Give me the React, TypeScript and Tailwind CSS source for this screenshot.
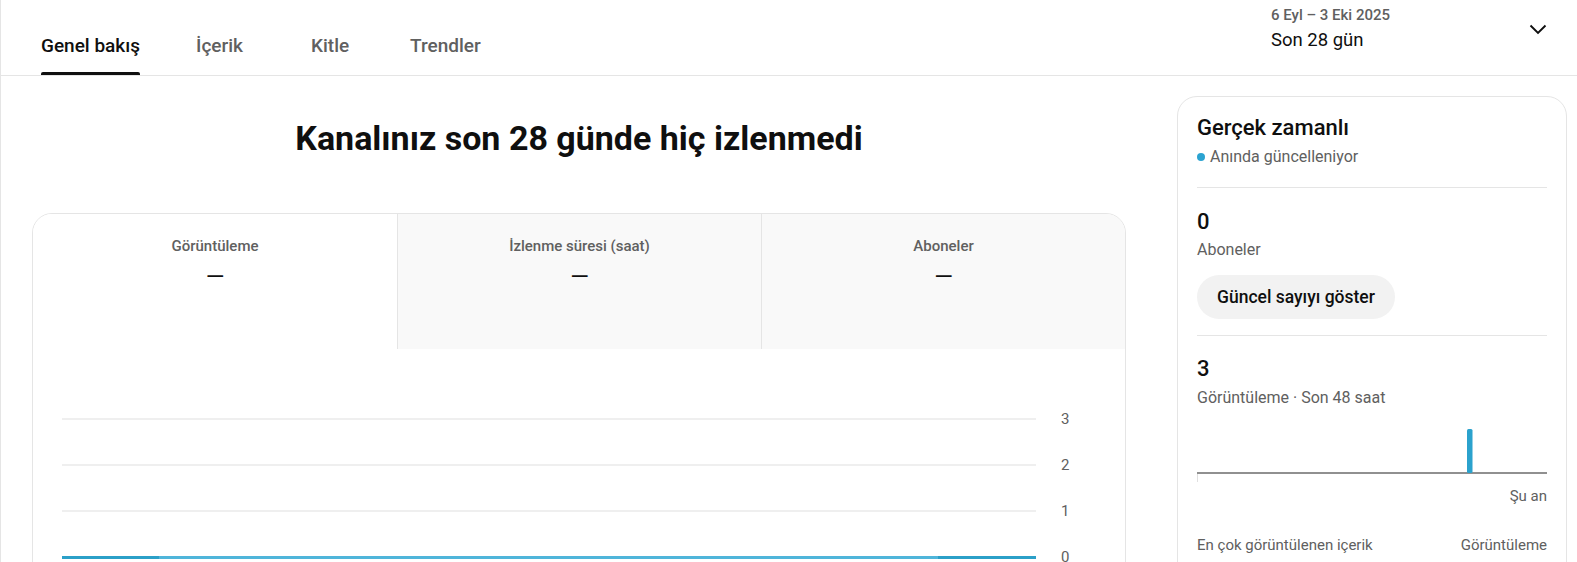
import React from 'react';

const tabs = [
  { label: 'Genel bakış', width: 'w-[155px]', active: true },
  { label: 'İçerik', width: 'w-[115px]', active: false },
  { label: 'Kitle', width: 'w-[99px]', active: false },
  { label: 'Trendler', width: 'w-auto', active: false },
];

const metrics = ['Görüntüleme', 'İzlenme süresi (saat)', 'Aboneler'];

function Header() {
  return (
    <div className="h-[76px] border-b border-[#e5e5e5] flex pl-[40px] pr-[30px]">
      <div className="flex items-start pt-[34px]">
        {tabs.map((tab) => (
          <div key={tab.label} className={tab.width}>
            <div className="inline-flex flex-col">
              <span
                className={
                  tab.active
                    ? 'text-[19px] leading-[24px] font-medium text-[#0f0f0f]'
                    : 'text-[19px] leading-[24px] font-medium text-[#606060]'
                }
              >
                {tab.label}
              </span>
              <span
                className={
                  tab.active
                    ? 'mt-[14px] h-[3px] rounded-t-[2px] bg-[#0f0f0f]'
                    : 'mt-[14px] h-[3px]'
                }
              />
            </div>
          </div>
        ))}
      </div>

      {/* date range picker */}
      <div className="ml-auto w-[276px] flex justify-between items-start pt-[5px]">
        <div className="flex flex-col">
          <span className="text-[15px] leading-[20px] font-medium text-[#606060]">6 Eyl – 3 Eki 2025</span>
          <span className="mt-[3px] text-[18.5px] leading-[24px] text-[#0f0f0f]">Son 28 gün</span>
        </div>
        <svg width="18" height="11" viewBox="0 0 18 11" className="mt-[19px]">
          <polyline points="1.5,1.5 9,9 16.5,1.5" fill="none" stroke="#0f0f0f" strokeWidth="1.9" />
        </svg>
      </div>
    </div>
  );
}

function OverviewCard() {
  const ticks = ['3', '2', '1'];
  return (
    <div className="mt-[55px] border border-[#e5e5e5] rounded-[20px] overflow-hidden pb-[60px]">
      <div className="grid grid-cols-3 h-[135px]">
        {metrics.map((m, i) => (
          <div
            key={m}
            className={
              i === 0
                ? 'flex flex-col items-center pt-[22px] bg-white'
                : 'flex flex-col items-center pt-[22px] bg-[#f9f9f9] border-l border-[#e5e5e5]'
            }
          >
            <span className="text-[15px] leading-[20px] font-medium text-[#606060]">{m}</span>
            <span className="mt-[9px] text-[24px] leading-[24px] text-[#0f0f0f]">—</span>
          </div>
        ))}
      </div>

      {/* views chart */}
      <div className="pt-[47px] pl-[29px]">
        {ticks.map((t) => (
          <div key={t} className="h-[46px] flex items-center">
            <div className="flex-1 h-[2px] bg-[#efefef]" />
            <span className="w-[89px] pl-[25px] text-[15px] leading-none text-[#606060]">{t}</span>
          </div>
        ))}
        <div className="h-[46px] flex items-center">
          <div className="flex-1 flex h-[3px]">
            <div className="w-[97px] bg-[#2ba0c8]" />
            <div className="flex-1 bg-[#4fb5da]" />
            <div className="w-[98px] bg-[#2ba0c8]" />
          </div>
          <span className="w-[89px] pl-[25px] text-[15px] leading-none text-[#606060]">0</span>
        </div>
      </div>
    </div>
  );
}

function RealtimeCard() {
  return (
    <div className="w-[390px] mt-[20px] border border-[#e5e5e5] rounded-[20px] px-[19px] pt-[17px] pb-[40px] self-start">
      <div className="text-[22px] leading-[28px] font-medium text-[#0f0f0f]">Gerçek zamanlı</div>
      <div className="mt-[5px] flex items-center gap-[5px]">
        <span className="w-[8px] h-[8px] rounded-full bg-[#2ba3d1]" />
        <span className="text-[16px] leading-[20px] text-[#606060]">Anında güncelleniyor</span>
      </div>

      <div className="mt-[20px] h-px bg-[#e5e5e5]" />

      <div className="mt-[20px] text-[22px] leading-[28px] font-medium text-[#0f0f0f]">0</div>
      <div className="mt-[4px] text-[16px] leading-[20px] text-[#606060]">Aboneler</div>
      <button className="mt-[15px] h-[44px] px-[20px] rounded-full bg-[#f2f2f2] text-[17.5px] font-medium text-[#0f0f0f]">
        Güncel sayıyı göster
      </button>

      <div className="mt-[16px] h-px bg-[#e5e5e5]" />

      <div className="mt-[19px] text-[22px] leading-[28px] font-medium text-[#0f0f0f]">3</div>
      <div className="mt-[5px] text-[16px] leading-[20px] text-[#606060]">Görüntüleme · Son 48 saat</div>

      {/* last 48 hours bars */}
      <svg width="350" height="76" viewBox="0 0 350 76" className="block">
        <line x1="0.5" y1="66" x2="0.5" y2="74" stroke="#e0e0e0" strokeWidth="1" />
        <rect x="0" y="64" width="350" height="2" fill="#909090" />
        <rect x="270" y="21" width="5.5" height="44" rx="1.5" fill="#2ba2cd" />
      </svg>
      <div className="mt-[2px] text-right text-[15px] leading-[20px] text-[#606060]">Şu an</div>

      <div className="mt-[29px] flex justify-between text-[15px] leading-[20px] text-[#606060]">
        <span>En çok görüntülenen içerik</span>
        <span>Görüntüleme</span>
      </div>
    </div>
  );
}

export default function App() {
  return (
    <div className="h-screen overflow-hidden bg-white border-l border-[#e5e5e5] font-['Roboto',sans-serif]">
      <Header />
      <div className="flex pl-[31px] pr-[10px] gap-[51px]">
        <div className="flex-1 flex flex-col">
          <h1 className="mt-[42px] text-center text-[34px] leading-[40px] font-bold text-[#0f0f0f]">
            Kanalınız son 28 günde hiç izlenmedi
          </h1>
          <OverviewCard />
        </div>
        <RealtimeCard />
      </div>
    </div>
  );
}
